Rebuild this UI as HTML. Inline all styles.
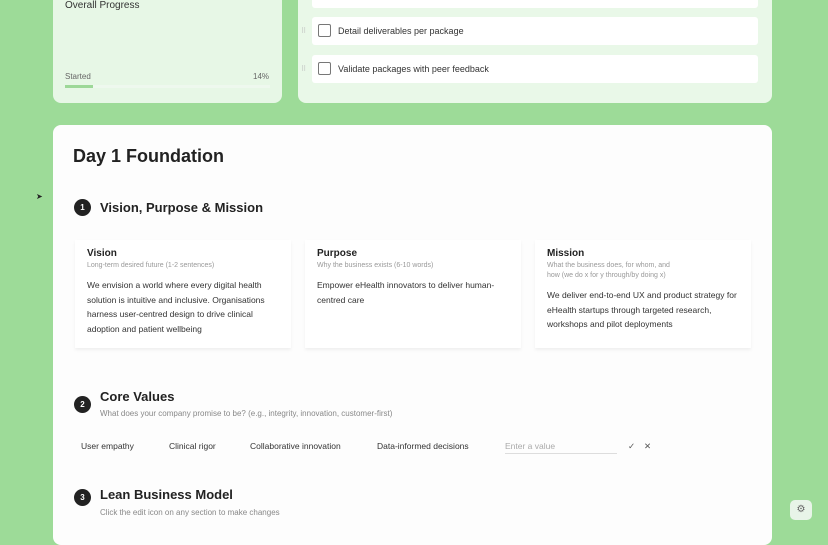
<!DOCTYPE html>
<html><head><style>
*{margin:0;padding:0;box-sizing:border-box}
body{width:828px;height:525px;overflow:hidden;background:#9ddb98;font-family:"Liberation Sans",sans-serif;color:#222;position:relative}
.abs{position:absolute}
.card{position:absolute;border-radius:8px}
.row{position:absolute;left:14px;right:14px;height:28px;background:#fff;border-radius:3px;font-size:9px;color:#333}
.cb{position:absolute;left:6px;top:7px;width:13px;height:13px;border:1px solid #777;border-radius:2px;background:#fff}
.row span{position:absolute;left:26px;top:9px}
.grip{position:absolute;left:-11px;top:10px;font-size:7px;color:#bbb}
.num{position:absolute;width:17px;height:17px;border-radius:50%;background:#222;color:#fff;font-size:8px;font-weight:bold;text-align:center;line-height:17px}
.h2{position:absolute;font-size:13px;font-weight:bold;color:#222}
.sub{position:absolute;font-size:8px;color:#888}
.box{position:absolute;top:240px;width:216px;height:108px;background:#fff;box-shadow:0 2px 3px rgba(0,0,0,.06);padding:8px 12px}
.box b{display:block;font-size:10px;color:#222}
.box i{display:block;font-style:normal;font-size:7px;color:#999;margin-top:2px;line-height:10px}
.box p{font-size:8.5px;line-height:14.5px;color:#333;margin-top:7px}
.val{position:absolute;top:441px;font-size:8.5px;color:#333}
</style></head><body>
<div class="card" style="left:53px;top:-10px;width:229px;height:113px;background:#e7f7e6">
<div class="abs" style="left:12px;top:10px;font-size:10px;color:#333">Overall Progress</div>
<div class="abs" style="left:12px;top:82px;font-size:8px;color:#666">Started</div>
<div class="abs" style="left:200px;top:82px;font-size:8px;color:#666">14%</div>
<div class="abs" style="left:12px;top:95px;width:205px;height:3px;background:#eef8ee"><div style="width:28px;height:3px;background:#9dd898"></div></div>
</div>
<div class="card" style="left:298px;top:-10px;width:474px;height:113px;background:#e9f8e8">
<div class="row" style="top:-8px;height:26px"><div class="cb" style="top:-3px"></div></div>
<div class="row" style="top:27px"><div class="grip">⠿</div><div class="cb"></div><span>Detail deliverables per package</span></div>
<div class="row" style="top:65px"><div class="grip">⠿</div><div class="cb"></div><span>Validate packages with peer feedback</span></div>
</div>
<div class="card" style="left:53px;top:125px;width:719px;height:420px;background:#fdfdfd"></div>
<div class="abs" style="left:73px;top:146px;font-size:18px;font-weight:bold;color:#222">Day 1 Foundation</div>
<div class="num" style="left:74px;top:199px">1</div>
<div class="h2" style="left:100px;top:200px">Vision, Purpose &amp; Mission</div>
<div class="box" style="left:75px"><b>Vision</b><i>Long-term desired future (1-2 sentences)</i><p>We envision a world where every digital health solution is intuitive and inclusive. Organisations harness user-centred design to drive clinical adoption and patient wellbeing</p></div>
<div class="box" style="left:305px"><b>Purpose</b><i>Why the business exists (6-10 words)</i><p>Empower eHealth innovators to deliver human-centred care</p></div>
<div class="box" style="left:535px"><b>Mission</b><i style="width:135px">What the business does, for whom, and how (we do x for y through/by doing x)</i><p>We deliver end-to-end UX and product strategy for eHealth startups through targeted research, workshops and pilot deployments</p></div>
<div class="num" style="left:74px;top:396px">2</div>
<div class="h2" style="left:100px;top:389px">Core Values</div>
<div class="sub" style="left:100px;top:409px">What does your company promise to be? (e.g., integrity, innovation, customer-first)</div>
<div class="val" style="left:81px">User empathy</div>
<div class="val" style="left:169px">Clinical rigor</div>
<div class="val" style="left:250px">Collaborative innovation</div>
<div class="val" style="left:377px">Data-informed decisions</div>
<div class="val" style="left:505px;color:#aaa">Enter a value</div>
<div class="abs" style="left:505px;top:453px;width:112px;height:1px;background:#ddd"></div>
<div class="val" style="left:628px;color:#555">✓</div>
<div class="val" style="left:644px;color:#555">✕</div>
<div class="num" style="left:74px;top:489px">3</div>
<div class="h2" style="left:100px;top:487px">Lean Business Model</div>
<div class="sub" style="left:100px;top:508px">Click the edit icon on any section to make changes</div>
<div class="abs" style="left:790px;top:500px;width:22px;height:20px;border-radius:5px;background:#e8f4e8;font-size:10px;text-align:center;line-height:20px;color:#666">⚙</div>
<div class="abs" style="left:36px;top:192px;font-size:8px">➤</div>
</body></html>
